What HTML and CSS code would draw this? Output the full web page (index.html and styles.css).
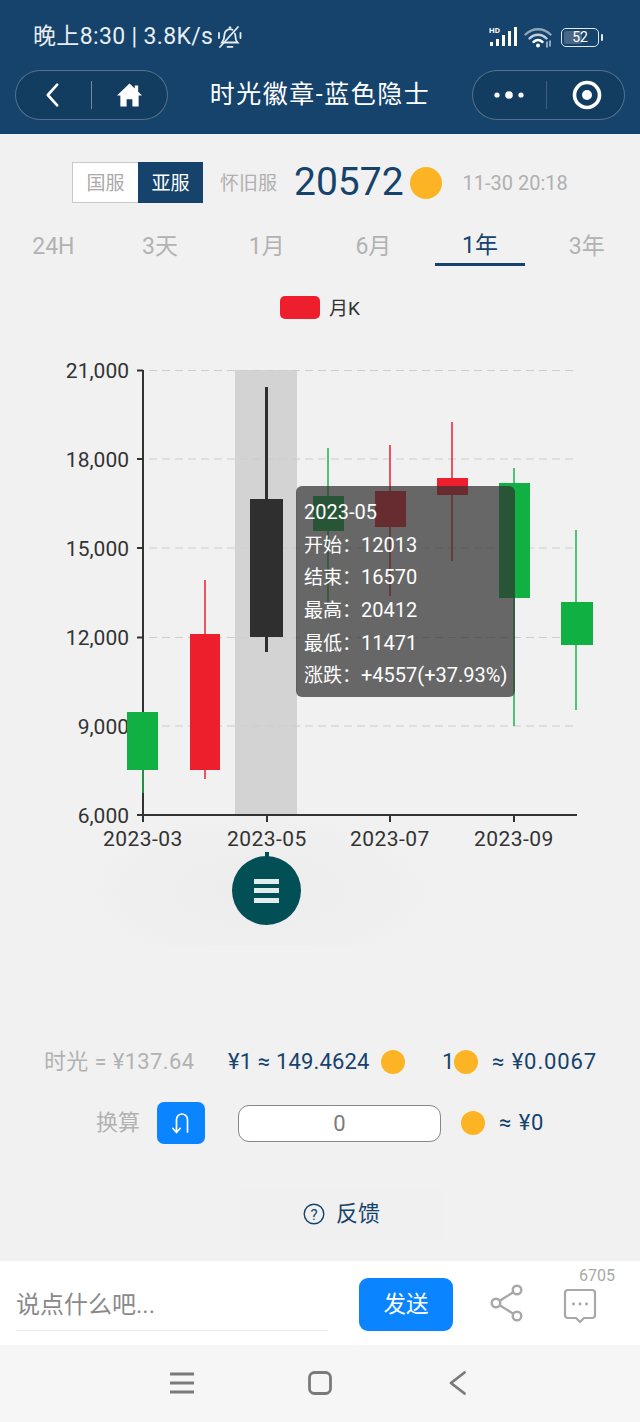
FILE: index.html
```html
<!DOCTYPE html>
<html lang="zh">
<head>
<meta charset="utf-8">
<title>时光徽章-蓝色隐士</title>
<link rel="stylesheet" href="styles.css">
</head>
<body>
<div class="page">
  <header class="top">
    <div class="status">
      <div class="status-left">
        <span>晚上8:30 | 3.8K/s</span>
        <svg class="bell" viewBox="0 0 26 24" fill="none" stroke="#e6ebf0" stroke-width="1.8" stroke-linecap="round">
          <path d="M7.500 17.500h13c-1.600-1.600-2-3-2-5.500 0-1.500-.2-2.600-.8-3.600M15.500 4.800a5.500 5.500 0 0 0-8 4.700c0 3.400-.6 5.400-2.500 8h2"/>
          <path d="M10.500 21.800h5M3 22 21 2M2 8v5M23.500 8v5M12.500 2.500h1"/>
        </svg>
      </div>
      <div class="status-right">
        <svg class="signal" viewBox="0 0 30 22">
          <text class="hd" x="0" y="7">HD</text>
          <rect x="1" y="16" width="3" height="4" fill="#fff"/>
          <rect x="7" y="13" width="3" height="7" fill="#fff"/>
          <rect x="13" y="9" width="3" height="11" fill="#fff"/>
          <rect x="19" y="5" width="3" height="15" fill="#fff"/>
          <rect x="25" y="1" width="3" height="19" fill="#fff"/>
        </svg>
        <svg class="wifi" viewBox="0 0 28 22" fill="none" stroke-linecap="round">
          <path d="M1.500 8.500C8.500 1.500 19.500 1.500 26.500 8.500" stroke="#8ea5ba" stroke-width="2.400"/>
          <path d="M5.500 12.500C10.500 7.500 17.500 7.500 22.500 12.500" stroke="#c3d0db" stroke-width="2.400"/>
          <path d="M9.500 16c3-2.800 6-2.800 9 0" stroke="#fff" stroke-width="2.400"/>
          <circle cx="14" cy="19.500" r="2" fill="#fff"/>
          <path d="M23 16v5M26 15v5" stroke="#c3d0db" stroke-width="1.400"/>
        </svg>
        <div class="battery"><span class="battery-fill"></span><span class="battery-num">52</span></div>
        <span class="battery-cap"></span>
      </div>
    </div>
    <nav class="navbar">
      <div class="capsule">
        <button class="cap-btn" aria-label="返回">
          <svg class="ic-back" viewBox="0 0 16 26" fill="none" stroke="#fff" stroke-width="2.800" stroke-linecap="round" stroke-linejoin="round"><path d="M13 2 3 13l10 11"/></svg>
        </button>
        <span class="cap-sep"></span>
        <button class="cap-btn" aria-label="首页">
          <svg class="ic-home" viewBox="0 0 26 24" fill="#fff"><path d="M13 0 0 12.500h3.500V24h6.500v-7.500h6V24h6.500V12.500H26l-4-3.900V2h-3.500v3.200z"/></svg>
        </button>
      </div>
      <h1 class="title">时光徽章-蓝色隐士</h1>
      <div class="capsule">
        <button class="cap-btn" aria-label="更多">
          <svg class="ic-dots" viewBox="0 0 32 10" fill="#fff"><circle cx="4" cy="5" r="2.600"/><circle cx="16" cy="5" r="3.800"/><circle cx="28" cy="5" r="2.600"/></svg>
        </button>
        <span class="cap-sep cap-sep-dim"></span>
        <button class="cap-btn cap-btn-end" aria-label="关闭">
          <svg class="ic-target" viewBox="0 0 30 30" fill="none"><circle cx="15" cy="15" r="12.500" stroke="#fff" stroke-width="3.600"/><circle cx="15" cy="15" r="5" fill="#fff"/></svg>
        </button>
      </div>
    </nav>
  </header>

  <section class="server">
    <div class="seg">
      <span class="seg-item">国服</span>
      <span class="seg-item seg-on">亚服</span>
    </div>
    <span class="server-old">怀旧服</span>
    <span class="price">20572</span>
    <span class="coin coin-lg"></span>
    <span class="stamp">11-30 20:18</span>
  </section>

  <section class="ranges">
    <span class="range">24H</span>
    <span class="range">3天</span>
    <span class="range">1月</span>
    <span class="range">6月</span>
    <span class="range range-on"><span class="range-label">1年</span></span>
    <span class="range">3年</span>
  </section>

  <section class="legend">
    <span class="legend-key"></span>
    <span class="legend-text">月K</span>
  </section>

  <section class="chart">
    <div class="fab-glow"></div>
    <svg class="plot" viewBox="0 340 640 620">
      <rect x="235" y="370" width="62" height="445" fill="#d3d3d3"/>
      <g class="grid">
        <path d="M149 370.500H577M149 459H577M149 548H577M149 637.500H577M149 726H577"/>
      </g>
      <g class="axis">
        <path d="M143 370V816M137 370.500H143M137 459H143M137 548H143M137 637.500H143M137 726H143M137 815H577"/>
        <path d="M143 815V822M267 815V822M390 815V822M514 815V822"/>
      </g>
      <g class="ylabels">
        <text x="129" y="378">21,000</text>
        <text x="129" y="467">18,000</text>
        <text x="129" y="556">15,000</text>
        <text x="129" y="645">12,000</text>
        <text x="129" y="734">9,000</text>
        <text x="129" y="823">6,000</text>
      </g>
      <g class="xlabels">
        <text x="143" y="846">2023-03</text>
        <text x="267" y="846">2023-05</text>
        <text x="390" y="846">2023-07</text>
        <text x="514" y="846">2023-09</text>
      </g>
      <g class="up">
        <path d="M143 712V793M328 448V603M514 468V726M576 530V710"/>
        <rect x="127" y="712" width="31" height="58"/>
        <rect x="313" y="496" width="31" height="35"/>
        <rect x="499" y="483" width="31" height="115"/>
        <rect x="561" y="602" width="32" height="43"/>
      </g>
      <g class="down">
        <path d="M205 580V779M390 445V596M452 422V561"/>
        <rect x="190" y="634" width="30" height="136"/>
        <rect x="375" y="491" width="31" height="36"/>
        <rect x="437" y="478" width="31" height="17"/>
      </g>
      <g class="picked">
        <path d="M266.500 387V652"/>
        <rect x="250" y="499" width="33" height="138"/>
      </g>
      <rect class="tick-top" x="265" y="852" width="4" height="6"/>
    </svg>
    <div class="tip">
      <div class="tip-row">2023-05</div>
      <div class="tip-row"><span class="tip-k">开始：</span>12013</div>
      <div class="tip-row"><span class="tip-k">结束：</span>16570</div>
      <div class="tip-row"><span class="tip-k">最高：</span>20412</div>
      <div class="tip-row"><span class="tip-k">最低：</span>11471</div>
      <div class="tip-row"><span class="tip-k">涨跌：</span>+4557(+37.93%)</div>
    </div>
    <button class="fab" aria-label="菜单">
      <span class="fab-bar"></span><span class="fab-bar"></span><span class="fab-bar"></span>
    </button>
  </section>

  <section class="rates">
    <span class="rate-grey">时光 = ¥137.64</span>
    <span class="rate-a">¥1 ≈ 149.4624</span>
    <span class="coin coin-a"></span>
    <span class="rate-b">1</span>
    <span class="coin"></span>
    <span class="rate-c">≈ ¥0.0067</span>
  </section>

  <section class="convert">
    <span class="convert-label">换算</span>
    <button class="swap" aria-label="切换">
      <svg class="ic-swap" viewBox="0 0 20 22" fill="none" stroke="#fff" stroke-width="1.700" stroke-linecap="round" stroke-linejoin="round">
        <path d="M16.500 20V7.500a5.500 5.500 0 0 0-11 0V20M1.800 16.300 5.500 20.500l3.700-4.200"/>
      </svg>
    </button>
    <div class="amount">0</div>
    <span class="coin coin-c"></span>
    <span class="rate-d">≈ ¥0</span>
  </section>

  <section class="feedback">
    <svg class="ic-help" viewBox="0 0 22 22" fill="none" stroke="#15436c" stroke-width="1.400">
      <circle cx="11" cy="11" r="9.800"/>
      <text class="help-q" x="11" y="16.500">?</text>
    </svg>
    <span class="feedback-text">反馈</span>
  </section>

  <section class="composer">
    <div class="say">说点什么吧...</div>
    <button class="send">发送</button>
    <svg class="ic-share" viewBox="0 0 34 38" fill="none" stroke="#a8a8a8" stroke-width="2.400">
      <circle cx="27" cy="6" r="4.300"/><circle cx="6" cy="19" r="4.300"/><circle cx="27" cy="32" r="4.300"/>
      <path d="M23.300 8.300 9.700 16.700M9.700 21.300l13.600 8.400"/>
    </svg>
    <div class="comments">
      <span class="comment-count">6705</span>
      <svg class="ic-comment" viewBox="0 0 34 36" fill="none" stroke="#a8a8a8" stroke-width="2.200" stroke-linejoin="round">
        <path d="M5 2h24a3 3 0 0 1 3 3v22a3 3 0 0 1-3 3h-8l-4 4-4-4H5a3 3 0 0 1-3-3V5a3 3 0 0 1 3-3z"/>
        <circle cx="10.500" cy="16" r="1.400" fill="#a0a0a0" stroke="none"/><circle cx="17" cy="16" r="1.400" fill="#a0a0a0" stroke="none"/><circle cx="23.500" cy="16" r="1.400" fill="#a0a0a0" stroke="none"/>
      </svg>
    </div>
  </section>

  <footer class="sysnav">
    <svg class="sys-menu" viewBox="0 0 24 22" fill="none" stroke="#7a7a7a" stroke-width="2.800"><path d="M0 2h24M0 11h24M0 20h24"/></svg>
    <svg class="sys-home" viewBox="0 0 24 24" fill="none" stroke="#7a7a7a" stroke-width="2.800"><rect x="1.500" y="1.500" width="21" height="21" rx="5"/></svg>
    <svg class="sys-back" viewBox="0 0 18 24" fill="none" stroke="#7a7a7a" stroke-width="2.800" stroke-linecap="round" stroke-linejoin="round"><path d="M15.500 1.500 2 12l13.500 10.500"/></svg>
  </footer>
</div>
</body>
</html>
```
FILE: styles.css
```css
* { box-sizing: border-box; }
html, body { margin: 0; padding: 0; }
body {
  width: 640px;
  height: 1422px;
  overflow: hidden;
  background: #f1f1f1;
  font-family: Roboto, "Noto Sans CJK SC", sans-serif;
  line-height: 1.2;
  color: #15436c;
}
button { border: 0; padding: 0; background: none; font: inherit; line-height: 1.2; color: inherit; }
svg { display: block; }
.page { width: 640px; height: 1422px; display: flex; flex-direction: column; }

/* header */
.top { height: 134px; background: #15436c; padding: 24px 15px 0; flex: none; }
.status { height: 26px; display: flex; justify-content: space-between; align-items: center; padding: 0 22px 0 18px; }
.status-left { display: flex; align-items: center; gap: 4px; font-size: 23px; letter-spacing: .35px; color: #e8edf1; line-height: 26px; white-space: nowrap; }
.bell { width: 26px; height: 24px; }
.status-right { display: flex; align-items: center; }
.signal { width: 30px; height: 22px; margin-right: -2px; }
.hd { font-size: 8px; font-weight: 700; fill: #fff; }
.wifi { width: 28px; height: 22px; margin-left: 7px; }
.battery { width: 38px; height: 19px; margin-left: 9px; border: 1.500px solid #dfe6ec; border-radius: 5px; position: relative; display: flex; align-items: center; justify-content: center; }
.battery-fill { position: absolute; left: 2px; top: 2px; bottom: 2px; width: 18px; background: #4a6885; border-radius: 2px; }
.battery-num { position: relative; font-size: 14px; line-height: 16px; color: #fff; }
.battery-cap { width: 2px; height: 7px; margin-left: 2px; background: #dfe6ec; border-radius: 1px; }

.navbar { height: 50px; margin-top: 20px; display: flex; align-items: center; justify-content: space-between; }
.capsule { width: 153px; height: 50px; border: 1px solid rgba(255,255,255,.28); border-radius: 25px; background: #133c61; display: flex; align-items: center; }
.cap-btn { flex: 1; height: 100%; display: flex; align-items: center; justify-content: center; }
.cap-btn-end { padding-left: 4px; }
.cap-sep { width: 1px; height: 28px; background: rgba(255,255,255,.4); flex: none; }
.cap-sep-dim { background: rgba(255,255,255,.18); }
.ic-back { width: 15px; height: 26px; margin-left: -2px; }
.ic-home { width: 25px; height: 24px; }
.ic-dots { width: 32px; height: 10px; }
.ic-target { width: 30px; height: 30px; }
.title { margin: 0; font-size: 25px; font-weight: 400; color: #fff; line-height: 30px; letter-spacing: 1.500px; white-space: nowrap; }

/* server row */
.server { height: 41px; margin-top: 28px; padding-left: 72px; display: flex; align-items: center; flex: none; }
.seg { width: 131px; height: 41px; display: flex; border: 1px solid #c9c9c9; background: #fff; }
.seg-item { flex: 1; display: flex; align-items: center; justify-content: center; padding-top: 3px; font-size: 19px; color: #a9a9a9; }
.seg-on { background: #15436c; color: #fff; margin: -1px -1px -1px 0; }
.server-old { margin-left: 17px; padding-top: 3px; font-size: 19px; color: #b0b0b0; width: 57px; white-space: nowrap; }
.price { margin-left: 17px; font-size: 39px; line-height: 41px; color: #15436c; }
.coin { width: 24px; height: 24px; border-radius: 50%; background: #fcb424; flex: none; }
.coin-lg { width: 32px; height: 32px; margin-left: 6px; }
.stamp { margin-left: 21px; font-size: 20px; color: #b0b0b0; white-space: nowrap; }

/* range tabs */
.ranges { height: 40px; margin-top: 23px; display: flex; flex: none; }
.range { flex: 1; display: flex; justify-content: center; align-items: center; padding-top: 2px; font-size: 23px; color: #b2b2b2; }
.range-on { color: #15436c; padding-top: 0; }
.range-label { width: 90px; height: 40px; line-height: 40px; text-align: center; border-bottom: 3px solid #15436c; }

/* legend */
.legend { height: 23px; margin-top: 30px; padding-left: 280px; display: flex; align-items: center; gap: 9px; flex: none; }
.legend-key { width: 40px; height: 23px; background: #ee1f2d; border-radius: 5px; }
.legend-text { padding-top: 3px; font-size: 19px; color: #333; }

/* chart */
.chart { position: relative; height: 620px; margin-top: 21px; flex: none; }
.plot { width: 640px; height: 620px; position: relative; }
.grid path { stroke: #cdcdcd; stroke-width: 1.200; stroke-dasharray: 8 5; fill: none; }
.axis path { stroke: #333; stroke-width: 2; fill: none; }
.ylabels text { font-family: Roboto, sans-serif; font-size: 21px; fill: #333; text-anchor: end; }
.xlabels text { font-family: Roboto, sans-serif; font-size: 21px; letter-spacing: .45px; fill: #333; text-anchor: middle; }
.up path { stroke: #1cb349; stroke-width: 1.500; fill: none; }
.up rect { fill: #10b142; }
.down path { stroke: #ee1f2d; stroke-width: 1.500; fill: none; }
.down rect { fill: #ee1f2d; }
.picked path { stroke: #2f2f2f; stroke-width: 3; fill: none; }
.picked rect { fill: #2f2f2f; }
.tick-top { fill: #034f56; }
.tip {
  position: absolute; left: 296px; top: 146px; width: 219px; height: 211px;
  padding: 10px 8px 0; background: rgba(50,50,50,.72); border-radius: 6px; color: #fff;
  font-size: 20px; line-height: 32.700px; white-space: nowrap;
}
.tip-row { height: 32.700px; }
.tip-k { font-size: 19px; }
.fab {
  position: absolute; left: 232px; top: 516px; width: 69px; height: 69px;
  border-radius: 50%; background: #034f56; display: flex; flex-direction: column; align-items: center; justify-content: center; gap: 4.500px;
}
.fab-bar { width: 25px; height: 5px; background: #e2eded; }
.fab-glow {
  position: absolute; left: 80px; top: 470px; width: 360px; height: 135px;
  background: radial-gradient(ellipse at 50% 60%, #ededed 0, #efefef 50%, #f1f1f1 72%);
}

/* rates */
.rates { height: 30px; margin-top: 87px; padding-left: 44px; display: flex; align-items: center; font-size: 22px; white-space: nowrap; flex: none; }
.rate-grey { color: #b2b2b2; width: 184px; letter-spacing: .35px; }
.rate-a { width: 141px; letter-spacing: .15px; }
.coin-a { margin-left: 12px; }
.rate-b { margin-left: 37px; width: 12px; }
.rate-c { margin-left: 14px; letter-spacing: .9px; }

.convert { height: 42px; margin-top: 25px; padding-left: 96px; display: flex; align-items: center; flex: none; }
.convert-label { font-size: 22px; color: #b2b2b2; width: 61px; }
.swap { width: 48px; height: 42px; background: #0a84ff; border-radius: 7px; display: flex; align-items: center; justify-content: center; }
.ic-swap { width: 20px; height: 22px; }
.amount { width: 203px; height: 37px; margin-left: 33px; border: 1px solid #888; border-radius: 11px; background: #fff; text-align: center; line-height: 35px; font-size: 22px; color: #7c7c7c; }
.coin-c { margin-left: 20px; }
.rate-d { margin-left: 14px; font-size: 22px; letter-spacing: .9px; }

.feedback { width: 205px; height: 50px; margin: 46px 0 0 240px; display: flex; align-items: center; justify-content: center; gap: 11px; padding-bottom: 2px; background: #f0f0f0; flex: none; font-size: 22px; }
.ic-help { width: 22px; height: 22px; margin-left: -2px; }
.help-q { font-size: 15px; fill: #15436c; stroke: none; text-anchor: middle; font-family: Roboto, sans-serif; }

/* composer */
.composer { height: 84px; margin-top: 21px; background: #fff; position: relative; display: flex; align-items: center; padding-left: 16px; flex: none; }
.say { width: 312px; height: 53px; margin-top: 3px; line-height: 54px; font-size: 24px; color: #8a8a8a; border-bottom: 1px solid #ececec; white-space: nowrap; }
.send { width: 94px; height: 53px; margin: 3px 0 0 31px; background: #0a84ff; border-radius: 9px; color: #fff; font-size: 22.500px; }
.ic-share { width: 34px; height: 38px; margin: 0 0 0 37px; }
.comments { position: absolute; left: 563px; top: 6px; width: 54px; height: 70px; }
.comment-count { position: absolute; left: 16px; top: 0; font-size: 16px; line-height: 18px; color: #a8a8a8; }
.ic-comment { position: absolute; left: 0; top: 21px; width: 34px; height: 36px; }

/* system nav */
.sysnav { height: 77px; background: #f6f6f6; position: relative; flex: none; }
.sys-menu { position: absolute; left: 170px; top: 27px; width: 24px; height: 22px; }
.sys-home { position: absolute; left: 308px; top: 26px; width: 24px; height: 24px; }
.sys-back { position: absolute; left: 449px; top: 26px; width: 18px; height: 24px; }
```
